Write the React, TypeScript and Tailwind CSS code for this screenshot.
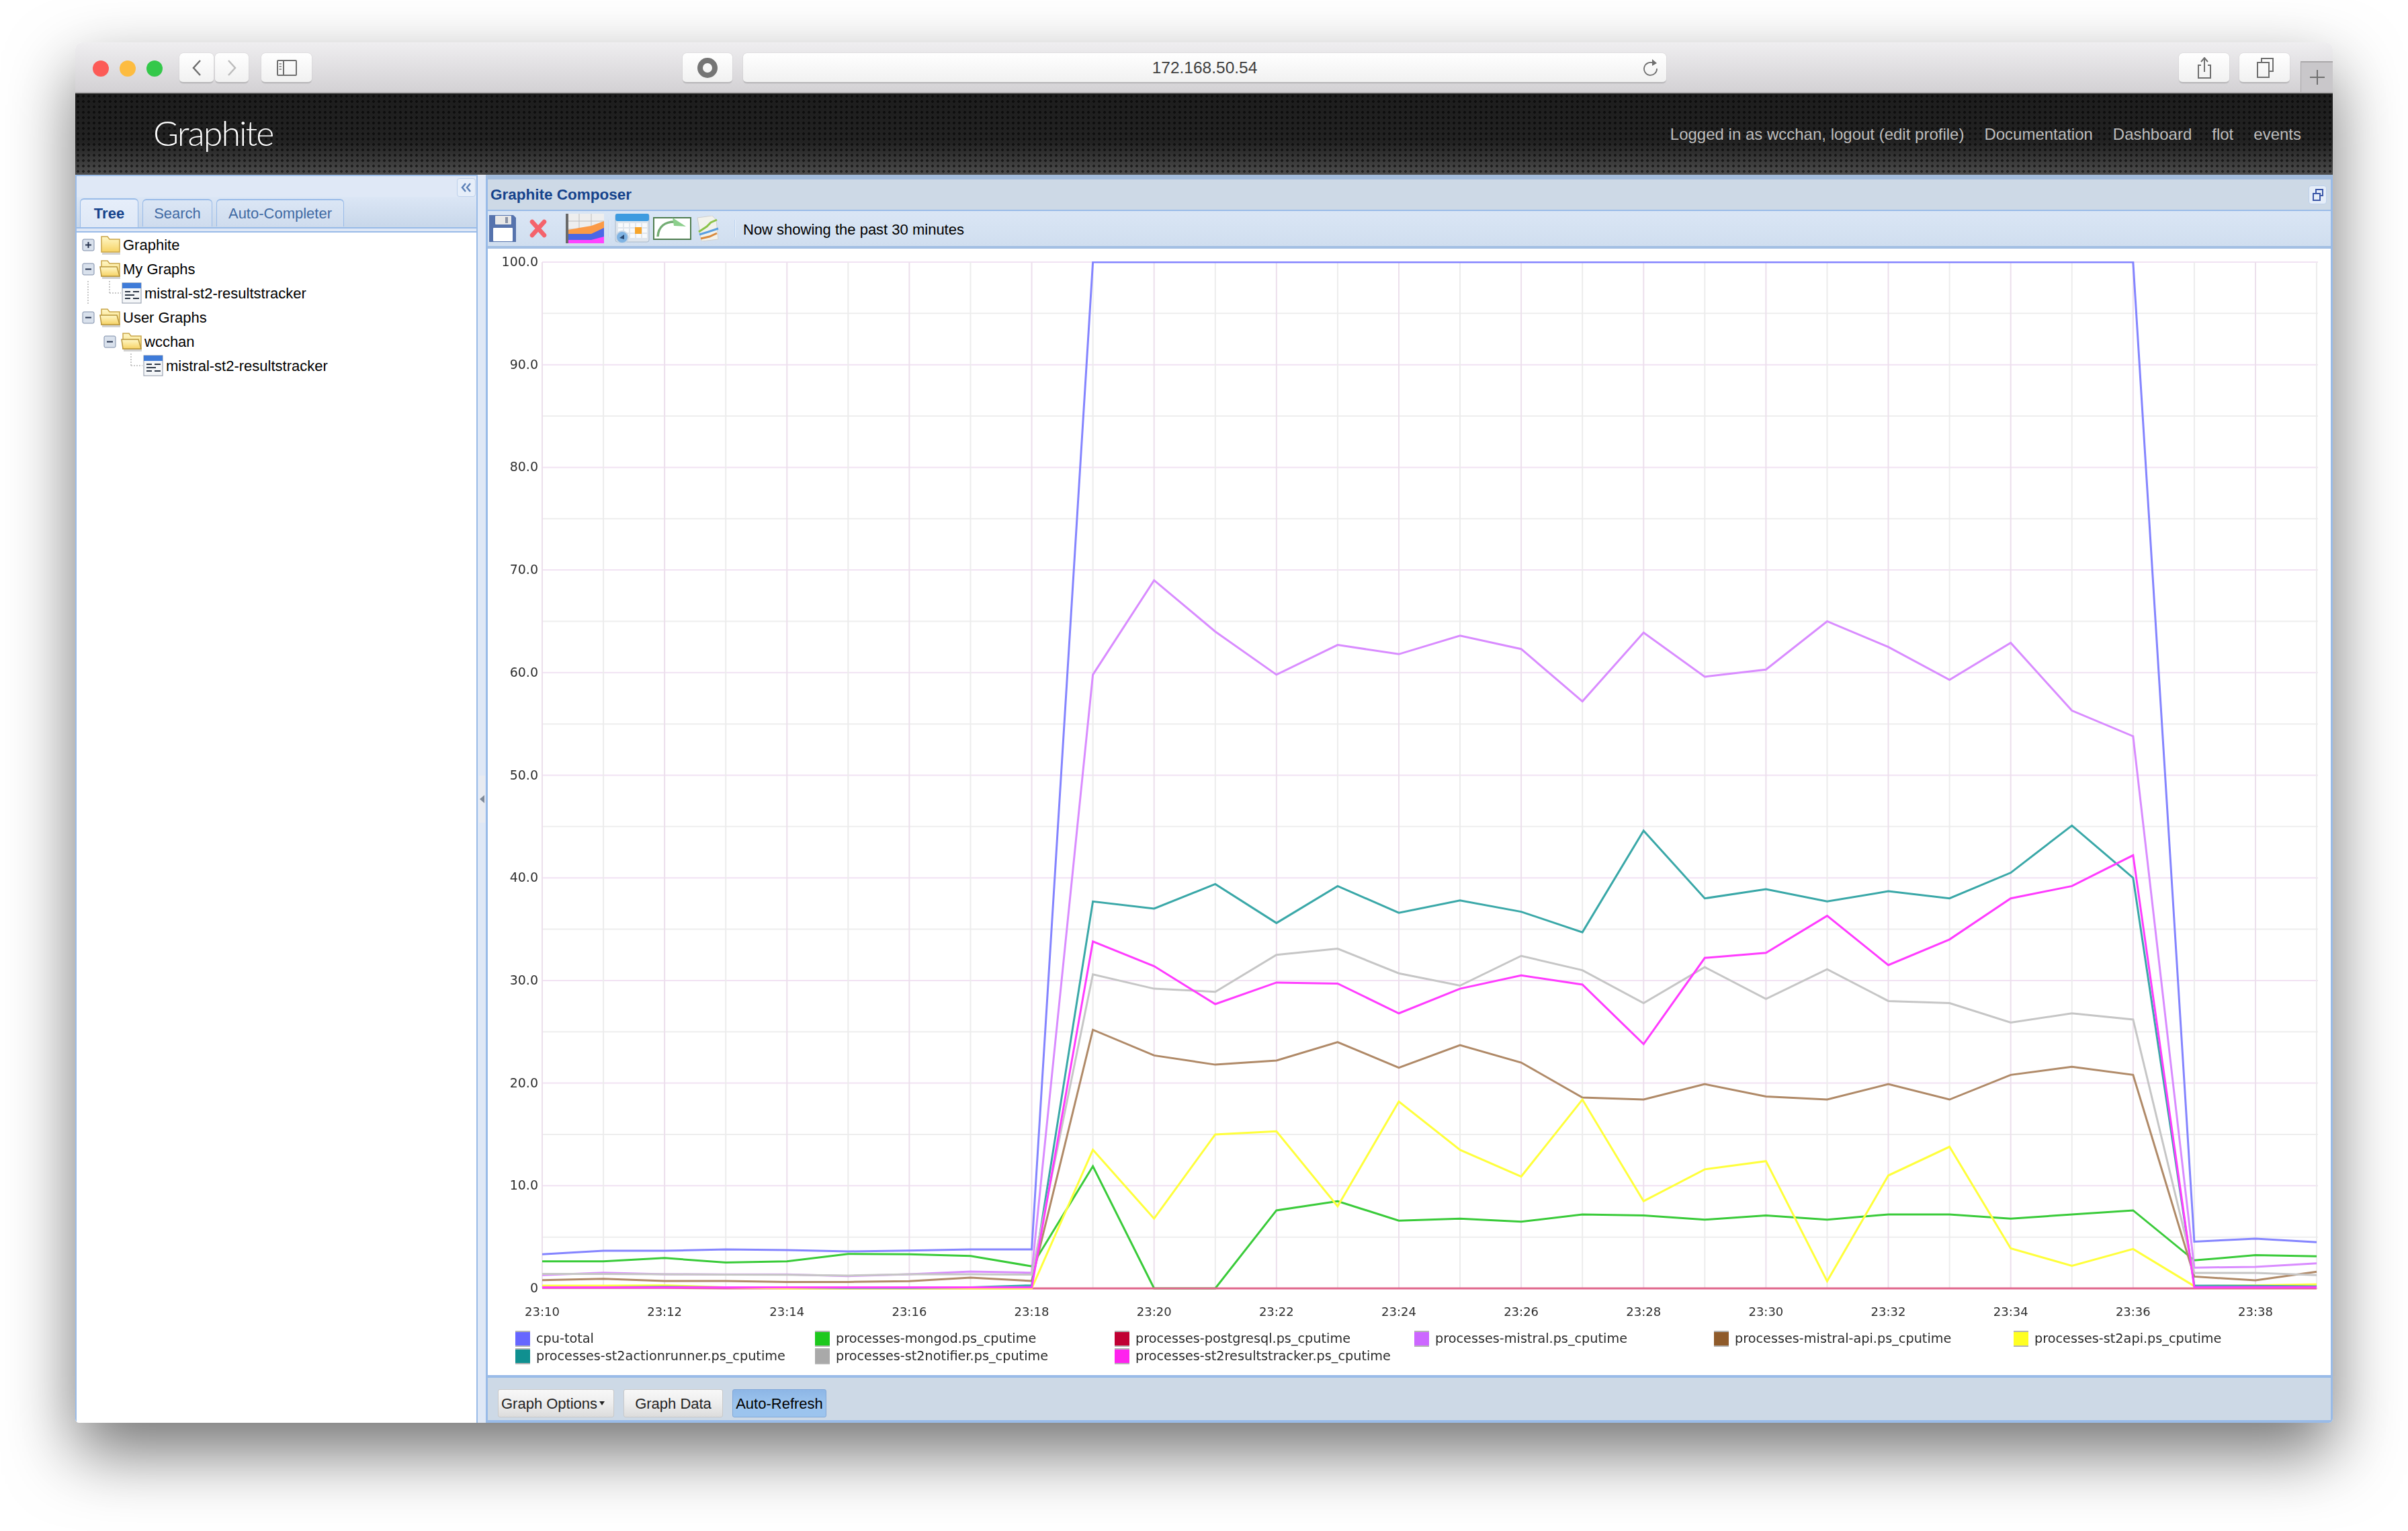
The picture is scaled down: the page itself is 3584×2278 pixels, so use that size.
const series = [
  { color: '#8484ff', v: [3.33, 3.66, 3.66, 3.8, 3.73, 3.6, 3.68, 3.8, 3.8, 100, 100, 100, 100, 100, 100, 100, 100, 100, 100, 100, 100, 100, 100, 100, 100, 100, 100, 4.55, 4.84, 4.5] },
  { color: '#3acb3a', v: [2.63, 2.63, 2.96, 2.52, 2.63, 3.36, 3.33, 3.16, 2.15, 11.9, 0, 0, 7.6, 8.5, 6.6, 6.8, 6.5, 7.2, 7.1, 6.7, 7.1, 6.7, 7.2, 7.2, 6.8, 7.2, 7.6, 2.73, 3.24, 3.13] },
  { color: '#e0668c', v: [0.05, 0.05, 0.05, 0, 0, 0, 0, 0, 0, 0, 0, 0, 0, 0, 0, 0, 0, 0, 0, 0, 0, 0, 0, 0, 0, 0, 0, 0, 0, 0] },
  { color: '#d98cff', v: [1.3, 1.53, 1.38, 1.36, 1.36, 1.2, 1.38, 1.64, 1.53, 59.8, 69, 64, 59.8, 62.7, 61.8, 63.6, 62.3, 57.2, 63.9, 59.6, 60.3, 65, 62.5, 59.3, 62.9, 56.3, 53.8, 2.02, 2.1, 2.44] },
  { color: '#b08a68', v: [0.8, 0.94, 0.72, 0.72, 0.63, 0.63, 0.7, 1.05, 0.72, 25.2, 22.7, 21.8, 22.2, 24, 21.5, 23.7, 22, 18.6, 18.4, 19.9, 18.7, 18.4, 19.9, 18.4, 20.8, 21.6, 20.8, 1.15, 0.78, 1.62] },
  { color: '#ffff3c', v: [0.26, 0.26, 0.3, 0.1, 0, 0, 0, 0, 0, 13.5, 6.8, 15, 15.3, 8, 18.2, 13.5, 10.9, 18.4, 8.5, 11.6, 12.4, 0.7, 11, 13.8, 3.9, 2.2, 3.84, 0.22, 0.3, 0.4] },
  { color: '#3aa8a8', v: [0.1, 0.1, 0.15, 0.1, 0.1, 0.05, 0.05, 0.1, 0.3, 37.7, 37, 39.4, 35.6, 39.2, 36.6, 37.8, 36.7, 34.7, 44.6, 38, 38.9, 37.7, 38.7, 38, 40.5, 45.1, 40, 0.28, 0.25, 0.2] },
  { color: '#c6c6c6', v: [1.4, 1.4, 1.38, 1.34, 1.32, 1.25, 1.38, 1.38, 1.34, 30.6, 29.2, 28.9, 32.5, 33.1, 30.7, 29.5, 32.4, 31, 27.8, 31.3, 28.2, 31.1, 28, 27.8, 25.9, 26.8, 26.2, 1.5, 1.5, 1.29] },
  { color: '#ff3cff', v: [0.1, 0.1, 0.1, 0.1, 0.1, 0.1, 0.1, 0.1, 0.1, 33.8, 31.4, 27.7, 29.8, 29.7, 26.8, 29.2, 30.5, 29.6, 23.8, 32.2, 32.7, 36.3, 31.5, 34, 38, 39.2, 42.2, 0.12, 0.12, 0.12] },
];

const legend = [
  { name: 'cpu-total', color: 'bg-[#6666ff]' },
  { name: 'processes-mongod.ps_cputime', color: 'bg-[#1ec81e]' },
  { name: 'processes-postgresql.ps_cputime', color: 'bg-[#c00033]' },
  { name: 'processes-mistral.ps_cputime', color: 'bg-[#cc66ff]' },
  { name: 'processes-mistral-api.ps_cputime', color: 'bg-[#8f5b2b]' },
  { name: 'processes-st2api.ps_cputime', color: 'bg-[#ffff22]' },
  { name: 'processes-st2actionrunner.ps_cputime', color: 'bg-[#0f9090]' },
  { name: 'processes-st2notifier.ps_cputime', color: 'bg-[#a9a9a9]' },
  { name: 'processes-st2resultstracker.ps_cputime', color: 'bg-[#ff22ee]' },
];

const px = (i: number) => 81 + i * 91.07;
const py = (v: number) => 20 + (100 - v) * 15.27;

const Chart = () => {
  const minutes = Array.from({ length: 30 }, (_, i) => i);
  const ticks = Array.from({ length: 21 }, (_, i) => i * 5);
  return (
    <svg width="2742" height="1600" className="block blur-[0.6px] font-['DejaVu_Sans',sans-serif]">
      <defs>
        <clipPath id="plot">
          <rect x="81" y="19" width="2643" height="1530" />
        </clipPath>
      </defs>
      {ticks.map((t) => (
        <line key={t} x1={81} x2={2724} y1={py(t)} y2={py(t)} stroke={t % 10 === 0 ? '#f1e2f3' : '#eeeeee'} strokeWidth="2" />
      ))}
      {minutes.map((i) => (
        <line key={i} x1={px(i)} x2={px(i)} y1={20} y2={py(0)} stroke={i % 2 === 0 ? '#ecdfec' : '#ececec'} strokeWidth="2" />
      ))}
      <g clipPath="url(#plot)">
        {series.map((s) => (
          <polyline key={s.color} points={s.v.map((v, i) => `${px(i)},${py(v)}`).join(' ')} fill="none" stroke={s.color} strokeWidth="3" />
        ))}
      </g>
      {ticks.filter((t) => t % 10 === 0).map((t) => (
        <text key={t} x={75} y={py(t) + 6} textAnchor="end" fontSize="19" fill="#2e2e2e">
          {t === 0 ? '0' : `${t}.0`}
        </text>
      ))}
      {minutes.filter((i) => i % 2 === 0).map((i) => (
        <text key={i} x={px(i)} y={1588} textAnchor="middle" fontSize="18" fill="#2e2e2e">
          {`23:${10 + i}`}
        </text>
      ))}
    </svg>
  );
};

const Elbow = ({ kind, through }: { kind?: 'plus' | 'minus' | 'end'; through?: boolean }) => (
  <svg width="32" height="36" className="shrink-0">
    {through && <line x1="15" x2="15" y1="0" y2="36" stroke="#c8c8c8" strokeWidth="2" strokeDasharray="2 2" />}
    {kind === 'end' && (
      <>
        <line x1="15" x2="15" y1="0" y2="18" stroke="#c8c8c8" strokeWidth="2" strokeDasharray="2 2" />
        <line x1="15" x2="32" y1="18" y2="18" stroke="#c8c8c8" strokeWidth="2" strokeDasharray="2 2" />
      </>
    )}
    {(kind === 'plus' || kind === 'minus') && (
      <>
        <rect x="7" y="10" width="17" height="17" rx="2" fill="#d9e1ec" stroke="#7c8ca8" />
        <line x1="11" x2="20" y1="18.5" y2="18.5" stroke="#26334f" strokeWidth="2" />
        {kind === 'plus' && <line x1="15.5" x2="15.5" y1="14" y2="23" stroke="#26334f" strokeWidth="2" />}
      </>
    )}
  </svg>
);

const Folder = ({ open }: { open?: boolean }) => (
  <svg width="32" height="32" viewBox="0 0 32 32" className="shrink-0">
    <defs>
      <linearGradient id="fold" x1="0" y1="0" x2="0" y2="1">
        <stop offset="0" stopColor="#fff8c8" />
        <stop offset="1" stopColor="#f6d264" />
      </linearGradient>
    </defs>
    <path d="M3 4 L12 4 L15 8 L30 8 L30 27 L3 27 Z" fill="url(#fold)" stroke="#c9a548" strokeWidth="1.5" />
    {open && <path d="M1 13 L26 13 L30 27 L3 27 Z" fill="url(#fold)" stroke="#b8963d" strokeWidth="1.5" />}
    <rect x="4" y="28" width="27" height="3" fill="#d2d2d2" />
  </svg>
);

const GraphDoc = () => (
  <svg width="32" height="32" viewBox="0 0 32 32" className="shrink-0">
    <rect x="2" y="1" width="28" height="30" fill="#f4f6f8" stroke="#8a94a4" />
    <rect x="2" y="1" width="28" height="8" fill="#3f7bd8" />
    <path d="M6 14 H14 M6 19 H20 M6 24 H14 M18 14 H27 M18 24 H27" stroke="#2d3746" strokeWidth="2" />
  </svg>
);

const TreeRow = ({ cells, icon, label }: { cells: React.ReactNode; icon: React.ReactNode; label: string }) => (
  <div className="flex h-[36px] items-center">
    {cells}
    {icon}
    <span className="ml-[3px] text-[22px] text-black">{label}</span>
  </div>
);

const Floppy = () => (
  <svg width="40" height="40" viewBox="0 0 40 40" className="shrink-0">
    <path d="M0 0 H36 L40 4 V40 H0 Z" fill="#5673ad" />
    <rect x="9" y="1" width="24" height="13" rx="1" fill="#e8e8e8" />
    <rect x="24" y="3" width="4" height="9" fill="#8a93a6" />
    <rect x="6" y="19" width="29" height="20" rx="1" fill="#ffffff" />
  </svg>
);

const AreaIcon = () => (
  <svg width="57" height="44" viewBox="0 0 57 44" className="shrink-0">
    <rect width="57" height="44" fill="#eeeeee" />
    <path d="M4 11 H57 M4 23 H57 M20 0 V44 M38 0 V44" stroke="#bdbdbd" strokeWidth="1" />
    <path d="M4 24 L20 21 L38 18 L57 11 V30 H4 Z" fill="#fb9a47" />
    <path d="M4 30 H38 L57 21 V44 H4 Z" fill="#4a67e6" />
    <path d="M4 39 H38 L57 34 V44 H4 Z" fill="#ff44ff" />
    <rect width="4" height="44" fill="#6a6a6a" />
  </svg>
);

const CalendarIcon = () => (
  <svg width="52" height="44" viewBox="0 0 52 44" className="shrink-0">
    <rect x="1" y="0" width="50" height="42" rx="3" fill="#dfe5ec" stroke="#a8b8ca" />
    <rect x="1" y="0" width="50" height="11" rx="3" fill="#3d9be0" />
    {[14, 22, 30].map((y) =>
      [5, 14, 23, 32, 41].map((x) => <rect key={`${x}-${y}`} x={x} y={y} width="7" height="6" fill="#f8fafc" />)
    )}
    <rect x="30" y="20" width="10" height="10" fill="#f7a52b" />
    <circle cx="11" cy="35" r="9" fill="#7fb3e3" stroke="#c7d6e6" strokeWidth="2" />
    <path d="M7 36 L14 31 V38 Z" fill="#2b4a73" />
  </svg>
);

const ArrowIcon = () => (
  <svg width="57" height="34" viewBox="0 0 57 34" className="shrink-0">
    <rect x="1" y="1" width="55" height="32" fill="#ffffff" stroke="#4f7d4f" strokeWidth="2" />
    <path d="M7 29 C8 14 18 7 32 7" fill="none" stroke="#74ad74" strokeWidth="3.5" />
    <path d="M29 1 L49 14 L31 13 Z" fill="#8ccf8c" />
  </svg>
);

const LinesIcon = () => (
  <svg width="35" height="38" viewBox="0 0 35 38" className="shrink-0">
    <path d="M2 3 L24 0 L30 6 L33 35 L8 38 Z" fill="#f2f2ec" stroke="#cfcfcf" />
    <path d="M4 24 L16 16 L22 10 L31 6" fill="none" stroke="#8bc34a" strokeWidth="3" />
    <path d="M5 28 L18 24 L33 19" fill="none" stroke="#5a9fe0" strokeWidth="3" />
    <path d="M7 34 L20 31 L31 26" fill="none" stroke="#d98a3d" strokeWidth="3" />
  </svg>
);

const SafariButton = ({ className, children }: { className: string; children?: React.ReactNode }) => (
  <div className={`flex h-[45px] items-center justify-center rounded-[6px] border-b-2 border-b-[#b9b8ba] bg-gradient-to-b from-white to-[#f1f1f1] shadow-[0_0_1px_rgba(0,0,0,0.35)] ${className}`}>
    {children}
  </div>
);

const ExtButton = ({ active, children }: { active?: boolean; children: React.ReactNode }) => (
  <div
    className={
      active
        ? 'flex h-[42px] w-[140px] items-center justify-center rounded-[3px] border border-[#82a8d8] bg-gradient-to-b from-[#8db6e6] via-[#9cc4ee] to-[#9cc4ee] text-[22px] text-black'
        : 'flex h-[42px] items-center justify-center rounded-[3px] border border-[#c9c9c9] bg-gradient-to-b from-[#f8f8f8] via-[#eeeeee] to-[#dcdcdc] text-[22px] text-[#222]'
    }
  >
    {children}
  </div>
);

export default function App() {
  return (
    <div className="h-[2278px] w-[3584px] overflow-hidden bg-white pl-[112px] pt-[63px] font-['Liberation_Sans',Arial,sans-serif]">
      <div className="flex h-[2054px] w-[3360px] flex-col overflow-hidden rounded-t-[10px] rounded-b-[6px] shadow-[0_44px_100px_rgba(0,0,0,0.55)]">
        {/* safari toolbar */}
        <div className="flex h-[76px] shrink-0 items-center border-b-2 border-b-[#aeacae] bg-gradient-to-b from-[#efeef0] to-[#d3d1d4] pl-[26px] pt-[3px]">
          <div className="size-[24px] rounded-full bg-[#fc5b57]" />
          <div className="ml-[16px] size-[24px] rounded-full bg-[#fdbc40]" />
          <div className="ml-[16px] size-[24px] rounded-full bg-[#34c84a]" />
          <SafariButton className="ml-[25px] w-[51px]">
            <svg width="16" height="26" viewBox="0 0 16 26"><path d="M13 2 L3 13 L13 24" fill="none" stroke="#6f6f6f" strokeWidth="2.5" /></svg>
          </SafariButton>
          <SafariButton className="ml-[2px] w-[50px]">
            <svg width="16" height="26" viewBox="0 0 16 26"><path d="M3 2 L13 13 L3 24" fill="none" stroke="#bdbdbd" strokeWidth="2.5" /></svg>
          </SafariButton>
          <SafariButton className="ml-[19px] w-[75px]">
            <svg width="30" height="24" viewBox="0 0 30 24">
              <rect x="1" y="1" width="28" height="22" rx="1" fill="none" stroke="#6f6f6f" strokeWidth="2" />
              <path d="M10 1 V23" stroke="#6f6f6f" strokeWidth="2" />
              <path d="M3.5 6 H7 M3.5 10 H7 M3.5 14 H7" stroke="#9a9a9a" strokeWidth="2" />
            </svg>
          </SafariButton>
          <SafariButton className="ml-[552px] w-[74px]">
            <svg width="32" height="32" viewBox="0 0 32 32"><circle cx="16" cy="16" r="11" fill="none" stroke="#757575" strokeWidth="8" /></svg>
          </SafariButton>
          <SafariButton className="relative ml-[16px] w-[1374px]">
            <span className="mt-[2px] text-[24.5px] text-[#3f3f3f]">172.168.50.54</span>
            <svg width="24" height="28" viewBox="0 0 24 28" className="absolute right-[10px] top-[9px]">
              <path d="M15 6 A9.5 9.5 0 1 0 20 14" fill="none" stroke="#6f6f6f" strokeWidth="1.8" />
              <path d="M13 0 L20 6 L13 10 Z" fill="#6f6f6f" />
            </svg>
          </SafariButton>
          <SafariButton className="ml-[763px] w-[75px]">
            <svg width="24" height="32" viewBox="0 0 24 32">
              <path d="M7 12 H3 V31 H21 V12 H17" fill="none" stroke="#6f6f6f" strokeWidth="2" />
              <path d="M12 22 V2 M7 7 L12 1 L17 7" fill="none" stroke="#6f6f6f" strokeWidth="2" />
            </svg>
          </SafariButton>
          <SafariButton className="ml-[15px] w-[75px]">
            <svg width="26" height="30" viewBox="0 0 26 30">
              <path d="M8 6 V1 H25 V20 H20" fill="none" stroke="#6f6f6f" strokeWidth="2" />
              <rect x="2" y="7" width="17" height="22" fill="none" stroke="#6f6f6f" strokeWidth="2" />
            </svg>
          </SafariButton>
          <div className="ml-[16px] flex h-[46px] w-[48px] items-center justify-center self-end border-l border-t-2 border-[#a9a7a9] bg-[#c9c7ca]">
            <svg width="24" height="24" viewBox="0 0 24 24"><path d="M12 1 V23 M1 12 H23" stroke="#6f6f6f" strokeWidth="2" /></svg>
          </div>
        </div>

        {/* graphite header */}
        <div className="flex h-[121px] shrink-0 items-center justify-between bg-[radial-gradient(circle,rgba(0,0,0,0.55)_1.6px,transparent_2.2px),linear-gradient(to_bottom,#1d1d1d,#222222_60%,#4c4c4c)] bg-size-[8px_8px,100%_100%] pl-[116px] pr-[47px]">
          <span className="mb-[6px] font-['Lato',sans-serif] text-[52px] font-light tracking-[-2px] text-white">Graphite</span>
          <div className="flex gap-[30px] text-[24px] text-[#bdbdbd]">
            <span>Logged in as wcchan, logout (edit profile)</span>
            <span>Documentation</span>
            <span>Dashboard</span>
            <span>flot</span>
            <span>events</span>
          </div>
        </div>

        {/* body */}
        <div className="flex min-h-0 flex-1">
          <div className="flex w-[599px] shrink-0 flex-col border-x-2 border-t-2 border-[#99bbe8] bg-white">
            <div className="flex h-[31px] shrink-0 justify-end bg-[#dfe8f6] pr-[1px] pt-[3px]">
              <div className="flex h-[28px] w-[28px] items-center justify-center rounded-[4px] border border-[#bcd0ea] bg-[#e6eef9]">
                <svg width="18" height="16" viewBox="0 0 18 16"><path d="M8 2 L3 8 L8 14 M15 2 L10 8 L15 14" fill="none" stroke="#5d82b8" strokeWidth="2.5" /></svg>
              </div>
            </div>
            <div className="flex h-[47px] shrink-0 items-end gap-[6px] border-b-2 border-b-[#99bbe8] bg-gradient-to-b from-[#dbe6f5] to-[#c8d7ea] pl-[5px]">
              <div className="flex h-[43px] w-[87px] items-center justify-center rounded-t-[6px] border-x border-t-2 border-[#99bbe8] bg-gradient-to-b from-[#e6eefa] to-[#dfe8f6] text-[22px] font-bold text-[#15428b]">Tree</div>
              <div className="mb-[1px] flex h-[41px] w-[104px] items-center justify-center rounded-t-[6px] border-x border-t-2 border-[#99bbe8] bg-gradient-to-b from-[#dbe6f5] to-[#cfdcee] text-[22px] text-[#416aa3]">Search</div>
              <div className="mb-[1px] flex h-[41px] w-[190px] items-center justify-center rounded-t-[6px] border-x border-t-2 border-[#99bbe8] bg-gradient-to-b from-[#dbe6f5] to-[#cfdcee] text-[22px] text-[#416aa3]">Auto-Completer</div>
            </div>
            <div className="h-[6px] shrink-0 border-b-2 border-b-[#99bbe8] bg-[#dfe8f6]" />
            <div className="pl-[2px]">
              <TreeRow cells={<Elbow kind="plus" />} icon={<Folder />} label="Graphite" />
              <TreeRow cells={<Elbow kind="minus" />} icon={<Folder open />} label="My Graphs" />
              <TreeRow cells={<><Elbow through /><Elbow kind="end" /></>} icon={<GraphDoc />} label="mistral-st2-resultstracker" />
              <TreeRow cells={<Elbow kind="minus" />} icon={<Folder open />} label="User Graphs" />
              <TreeRow cells={<><div className="w-[32px]" /><Elbow kind="minus" /></>} icon={<Folder open />} label="wcchan" />
              <TreeRow cells={<><div className="w-[32px]" /><div className="w-[32px]" /><Elbow kind="end" /></>} icon={<GraphDoc />} label="mistral-st2-resultstracker" />
            </div>
          </div>

          {/* splitter */}
          <div className="flex w-[12px] shrink-0 items-center justify-center bg-[#dfe8f6]">
            <div className="flex h-[70px] w-[9px] items-center justify-center bg-[#e8ebf1]">
              <svg width="7" height="12" viewBox="0 0 7 12"><path d="M7 0 V12 L0 6 Z" fill="#7f8a99" /></svg>
            </div>
          </div>

          {/* composer */}
          <div className="flex min-w-0 flex-1 flex-col border-x-[3px] border-x-[#99bbe8] border-t-[7px] border-t-[#a3bcdc]">
            <div className="flex h-[47px] shrink-0 items-center justify-between border-b-2 border-b-[#99bbe8] bg-[#cdd9e6] pl-[4px] pr-[6px]">
              <span className="text-[22.5px] font-bold text-[#15428b]">Graphite Composer</span>
              <div className="flex h-[28px] w-[27px] items-center justify-center rounded-[4px] border border-[#bcd0ea] bg-[#e6eef9]">
                <svg width="16" height="18" viewBox="0 0 16 18">
                  <rect x="5" y="1" width="10" height="9" fill="none" stroke="#3b57a8" strokeWidth="2" />
                  <rect x="1" y="7" width="10" height="10" fill="#e6eef9" stroke="#3b57a8" strokeWidth="2" />
                </svg>
              </div>
            </div>
            <div className="flex h-[56px] shrink-0 items-center border-b-4 border-b-[#a3bfe3] bg-gradient-to-b from-[#dae6f5] to-[#d0deef] pl-[2px]">
              <Floppy />
              <svg width="26" height="28" viewBox="0 0 26 28" className="ml-[20px] shrink-0"><path d="M4 4 L22 24 M22 4 L4 24" stroke="#f4636b" strokeWidth="6.5" strokeLinecap="round" /></svg>
              <div className="ml-[28px]"><AreaIcon /></div>
              <div className="ml-[7px] h-[26px] w-[2px] bg-gradient-to-r from-[#a9c6ea] to-white" />
              <div className="ml-[7px]"><CalendarIcon /></div>
              <div className="ml-[5px]"><ArrowIcon /></div>
              <div className="ml-[7px]"><LinesIcon /></div>
              <div className="ml-[22px] h-[26px] w-[2px] bg-gradient-to-r from-[#a9c6ea] to-white" />
              <span className="ml-[11px] mt-[2px] text-[22px] text-black">Now showing the past 30 minutes</span>
            </div>

            <div className="min-h-0 flex-1 bg-white">
              <Chart />
              <div className="mt-[9px] grid grid-cols-[repeat(6,446px)] pl-[41px] blur-[0.4px]">
                {legend.map((l) => (
                  <div key={l.name} className="flex h-[26px] items-center gap-[9px]">
                    <div className={`h-[24px] w-[22px] shrink-0 border-y-2 border-y-[#b5b5b5] ${l.color}`} />
                    <span className="whitespace-nowrap font-['DejaVu_Sans',sans-serif] text-[19.25px] text-[#2a2a2a]">{l.name}</span>
                  </div>
                ))}
              </div>
            </div>

            <div className="flex h-[71px] shrink-0 items-start gap-[14px] border-y-4 border-y-[#99bbe8] bg-[#cdd9e6] pl-[15px] pt-[17px]">
              <ExtButton>
                <div className="flex w-[171px] items-center gap-[3px] pl-[4px]">
                  Graph Options
                  <svg width="8" height="6" viewBox="0 0 8 6"><path d="M0 0 H8 L4 6 Z" fill="#222" /></svg>
                </div>
              </ExtButton>
              <ExtButton><div className="w-[146px] text-center">Graph Data</div></ExtButton>
              <ExtButton active>Auto-Refresh</ExtButton>
            </div>
          </div>
        </div>
      </div>
    </div>
  );
}
